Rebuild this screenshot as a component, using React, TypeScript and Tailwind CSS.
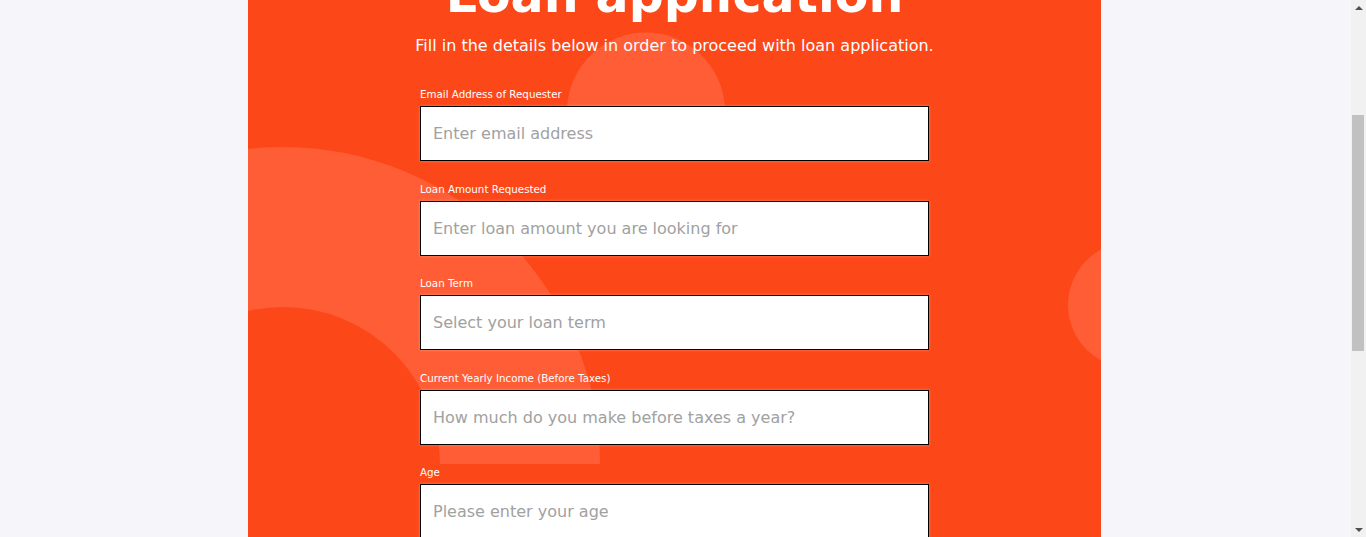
const fields = [
  { label: 'Email Address of Requester', placeholder: 'Enter email address', type: 'email' },
  { label: 'Loan Amount Requested', placeholder: 'Enter loan amount you are looking for', type: 'text' },
  { label: 'Loan Term', placeholder: 'Select your loan term', type: 'text' },
  { label: 'Current Yearly Income (Before Taxes)', placeholder: 'How much do you make before taxes a year?', type: 'text' },
  { label: 'Age', placeholder: 'Please enter your age', type: 'number' },
];

export default function App() {
  return (
    <div className="flex h-screen overflow-hidden bg-[#f6f6fa] font-['DejaVu_Sans',sans-serif]">
      <div className="flex-1 overflow-hidden pr-[2px]">
        <section className="relative mx-auto -mt-[121px] w-[853px] overflow-hidden bg-[#fc4719] pb-24 pt-[87px]">
          <Decor />
          <div className="relative flex flex-col items-center">
            <h1 className="text-[49px] font-bold leading-[59px] text-white">Loan application</h1>
            <p className="mt-[9px] text-[16px] leading-[24px] text-white">
              Fill in the details below in order to proceed with loan application.
            </p>
            <form className="mt-[28px] flex w-[509px] flex-col gap-[19.5px]">
              {fields.map((f) => (
                <Field key={f.label} {...f} />
              ))}
            </form>
          </div>
        </section>
      </div>
      <Scrollbar />
    </div>
  );
}

function Field({ label, placeholder, type }: { label: string; placeholder: string; type: string }) {
  return (
    <label className="flex flex-col">
      <span className="mb-[4px] text-[10.3px] leading-[16px] text-white">{label}</span>
      <input
        type={type}
        placeholder={placeholder}
        className="h-[55px] w-full border border-black bg-white px-[12px] text-[16px] text-gray-800 shadow-[0_0_3px_rgba(255,255,255,0.3)] outline-none placeholder:text-[#a1a1a1]"
      />
    </label>
  );
}

// soft background shapes, in card coordinates (header circle is cut where the form begins)
function Decor() {
  return (
    <svg className="absolute left-0 top-0" width="853" height="760" viewBox="0 0 853 760" aria-hidden>
      <path d="M -282 585 A 317 317 0 0 1 352 585 L 192 585 A 157 157 0 0 0 -122 585 Z" fill="#fe5d35" />
      <path d="M 319.2 227 A 79 79 0 0 1 476.8 227 Z" fill="#fe5d35" />
      <circle cx="883" cy="426" r="63" fill="#fe5d35" />
    </svg>
  );
}

function Scrollbar() {
  return (
    <div className="flex h-screen w-[15px] shrink-0 flex-col bg-[#f1f1f1]">
      <div className="flex h-[15px] items-center justify-center">
        <div className="h-0 w-0 border-x-[4px] border-b-[4px] border-x-transparent border-b-[#505050]" />
      </div>
      <div className="ml-[1px] mt-[100px] h-[236px] w-[12px] bg-[#c1c1c1]" />
      <div className="flex-1" />
      <div className="flex h-[15px] items-center justify-center">
        <div className="h-0 w-0 border-x-[4px] border-t-[4px] border-x-transparent border-t-[#505050]" />
      </div>
    </div>
  );
}
